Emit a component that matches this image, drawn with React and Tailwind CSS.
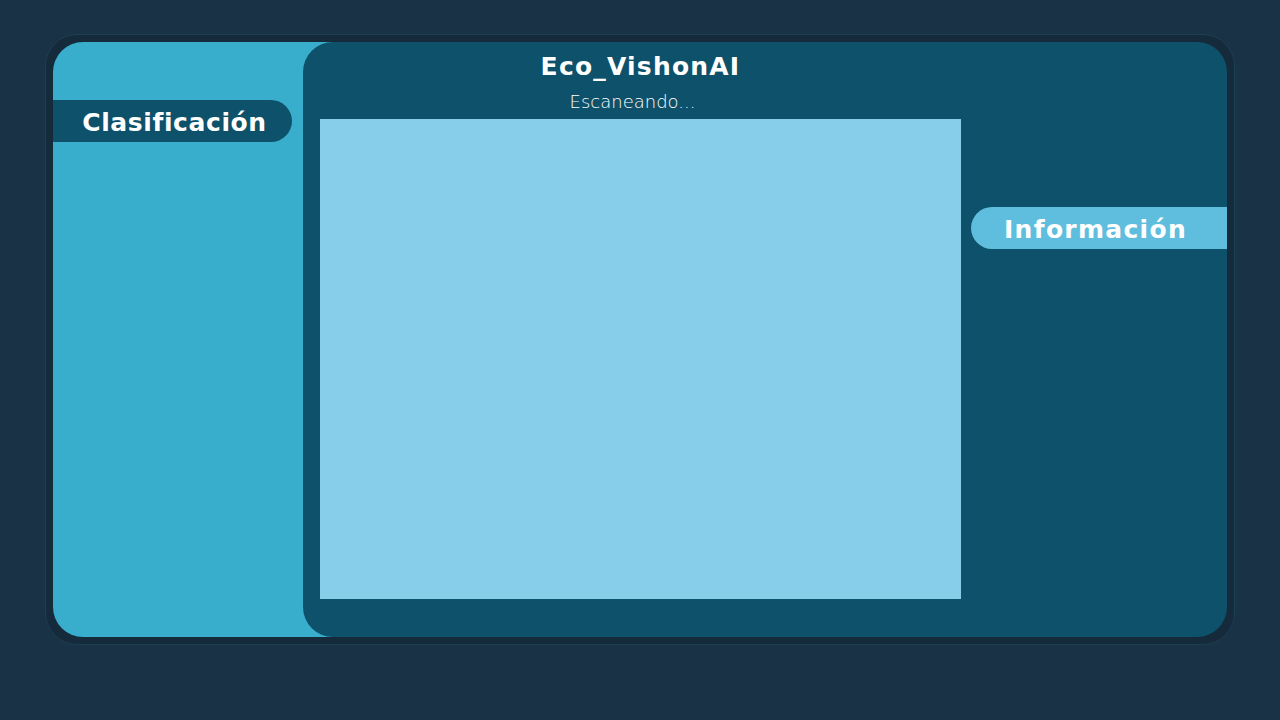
import React from 'react';

const App = () => {
  return (
    <div className="min-h-screen w-full bg-[#1a3246] pt-[34px] pl-[45px] font-['DejaVu_Sans',sans-serif]">
      {/* Device frame */}
      <div className="w-[1190px] h-[611px] rounded-[32px] bg-[#152a3b] border border-[#1b3f55] p-[7px] flex">
        {/* Left panel: classification */}
        <div className="w-[280px] -mr-[30px] bg-[#38aecc] rounded-l-[30px] pt-[58px]">
          <div className="w-[239px] h-[42px] pt-[3px] pl-[4px] bg-[#0e516a] rounded-r-full flex items-center justify-center text-white font-bold text-[25px] tracking-[0.6px]">
            Clasificación
          </div>
        </div>

        {/* Main panel */}
        <div className="relative z-10 flex-1 bg-[#0e516a] rounded-[30px] flex pl-[17px]">
          <div className="w-[641px] flex flex-col items-center pt-[12px]">
            <h1 className="text-white font-bold text-[25px] leading-none tracking-[1.2px]">Eco_VishonAI</h1>
            <p className="mt-[14px] text-white font-extralight text-[18px] leading-none -ml-[16px]">Escaneando...</p>
            <div className="mt-[8px] w-[641px] h-[480px] bg-[#87ceeb]"></div>
          </div>

          {/* Right column: information */}
          <div className="flex-1 ml-[10px] pt-[165px]">
            <div className="h-[42px] pt-[3px] bg-[#5fbedd] rounded-l-full flex items-center pl-[33px] text-white font-bold text-[25px] tracking-[1.3px]">
              Información
            </div>
          </div>
        </div>
      </div>
    </div>
  );
};

export default App;
